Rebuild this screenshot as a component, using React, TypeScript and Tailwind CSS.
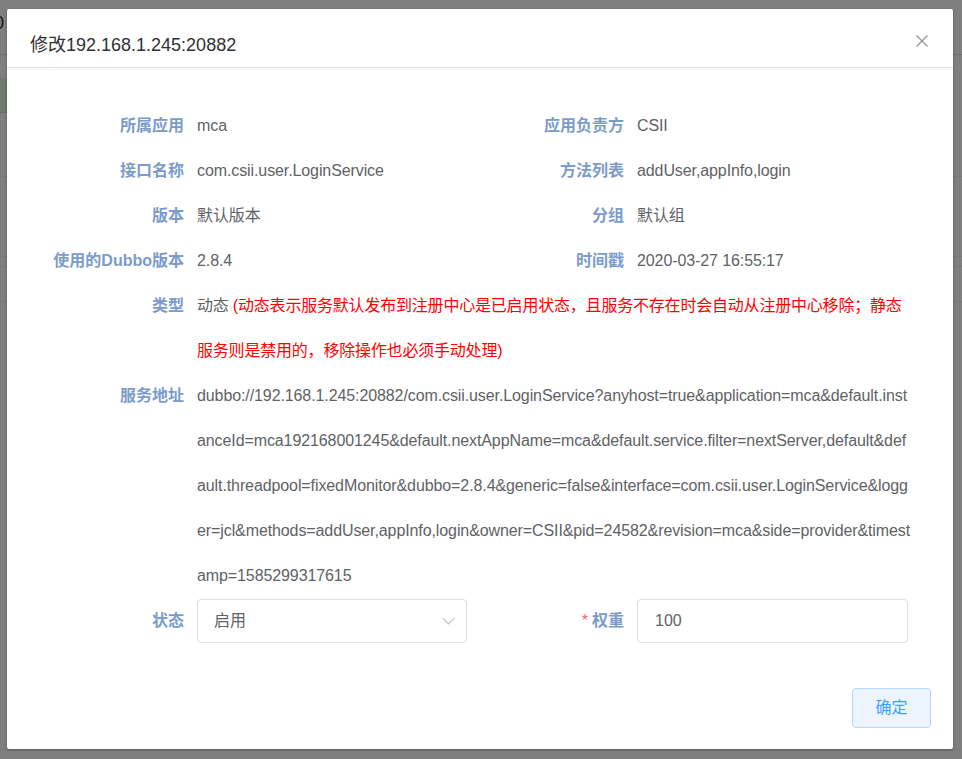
import React from 'react';

const font = "font-['Liberation_Sans','Noto_Sans_CJK_SC',sans-serif]";

function Label({ children }: { children: React.ReactNode }) {
  return (
    <div className="w-[170px] shrink-0 pr-[13px] text-right font-bold text-[#7b9bcb] leading-[45px]">
      {children}
    </div>
  );
}

function Pair({ label, value }: { label: React.ReactNode; value: React.ReactNode }) {
  return (
    <div className="flex w-[440px]">
      <Label>{label}</Label>
      <div className="text-[#606266] leading-[45px] whitespace-nowrap tracking-[-0.1px]">{value}</div>
    </div>
  );
}

const address = [
  'dubbo://192.168.1.245:20882/com.csii.user.LoginService?anyhost=true&application=mca&default.inst',
  'anceId=mca192168001245&default.nextAppName=mca&default.service.filter=nextServer,default&def',
  'ault.threadpool=fixedMonitor&dubbo=2.8.4&generic=false&interface=com.csii.user.LoginService&logg',
  'er=jcl&methods=addUser,appInfo,login&owner=CSII&pid=24582&revision=mca&side=provider&timest',
  'amp=1585299317615',
];

export default function App() {
  return (
    <div className={`relative w-[962px] h-[759px] overflow-hidden bg-white text-[16px] ${font}`}>
      {/* page behind the mask */}
      <div className="flex flex-col">
        <div className="h-[55px] border-b border-[#dcdfe6] pt-[10px] text-[18px] text-[#303133]">
          <span className="-ml-[6px]">0</span>
        </div>
        <div className="h-[23px]" />
        <div className="h-[35px] w-[300px] bg-[#e1f3d8] border-b border-[#c2e7b0]" />
        <div className="h-[64px] border-b border-[#ebeef5]" />
        <div className="h-[80px] border-b border-[#ebeef5]" />
        <div className="h-[10px] border-b border-[#ebeef5]" />
        <div className="h-[35px] border-b border-[#ebeef5]" />
      </div>

      <div className="absolute inset-0 bg-black/50" />

      <div className="absolute left-[7px] top-[9px] w-[946px] bg-white rounded-[2px] shadow-[0_1px_3px_rgba(0,0,0,0.3)]">
        <div className="relative h-[59px] border-b border-[#dcdfe6] px-[23px] pt-[24px]">
          <div className="text-[18px] leading-[24px] text-[#303133]">修改192.168.1.245:20882</div>
          <svg className="absolute top-[26px] right-[25px] w-[12px] h-[12px]" viewBox="0 0 12 12" fill="none" stroke="#909399" strokeWidth="1.2">
            <path d="M0.5 0.5 L11.5 11.5 M11.5 0.5 L0.5 11.5" />
          </svg>
        </div>

        <div className="pl-[20px] pt-[35px]">
          <div className="flex">
            <Pair label="所属应用" value="mca" />
            <Pair label="应用负责方" value="CSII" />
          </div>
          <div className="flex">
            <Pair label="接口名称" value="com.csii.user.LoginService" />
            <Pair label="方法列表" value="addUser,appInfo,login" />
          </div>
          <div className="flex">
            <Pair label="版本" value="默认版本" />
            <Pair label="分组" value="默认组" />
          </div>
          <div className="flex">
            <Pair label="使用的Dubbo版本" value="2.8.4" />
            <Pair label="时间戳" value="2020-03-27 16:55:17" />
          </div>

          <div className="flex">
            <Label>类型</Label>
            <div className="leading-[45px] whitespace-nowrap tracking-[-0.2px]">
              <div>
                <span className="text-[#606266]">动态 </span>
                <span className="text-[#ff0000]">(动态表示服务默认发布到注册中心是已启用状态，且服务不存在时会自动从注册中心移除；静态</span>
              </div>
              <div className="text-[#ff0000]">服务则是禁用的，移除操作也必须手动处理)</div>
            </div>
          </div>

          <div className="flex">
            <Label>服务地址</Label>
            <div className="leading-[45px] whitespace-nowrap text-[#606266] tracking-[-0.1px]">
              {address.map((line) => (
                <div key={line}>{line}</div>
              ))}
            </div>
          </div>

          <div className="flex h-[45px] items-center">
            <div className="flex w-[440px] items-center">
              <Label>状态</Label>
              <div className="flex h-[44px] w-[270px] items-center justify-between rounded-[4px] border border-[#dcdfe6] pl-[16px] pr-[11px] text-[#606266]">
                <span>启用</span>
                <svg className="w-[13px] h-[8px]" viewBox="0 0 13 8" fill="none" stroke="#c0c4cc" strokeWidth="1.2">
                  <path d="M0.5 0.8 L6.5 6.8 L12.5 0.8" />
                </svg>
              </div>
            </div>
            <div className="flex w-[441px] items-center">
              <Label>
                <span className="mr-[4px] font-normal text-[#f56c6c]">*</span>权重
              </Label>
              <div className="flex h-[44px] w-[271px] items-center rounded-[4px] border border-[#dcdfe6] px-[17px] text-[#606266]">
                100
              </div>
            </div>
          </div>
        </div>

        <div className="flex justify-end px-[22px] pt-[45px] pb-[21px]">
          <button className="h-[40px] w-[79px] rounded-[4px] border border-[#b3d8ff] bg-[#ecf5ff] text-[16px] text-[#409eff]">
            确定
          </button>
        </div>
      </div>
    </div>
  );
}
